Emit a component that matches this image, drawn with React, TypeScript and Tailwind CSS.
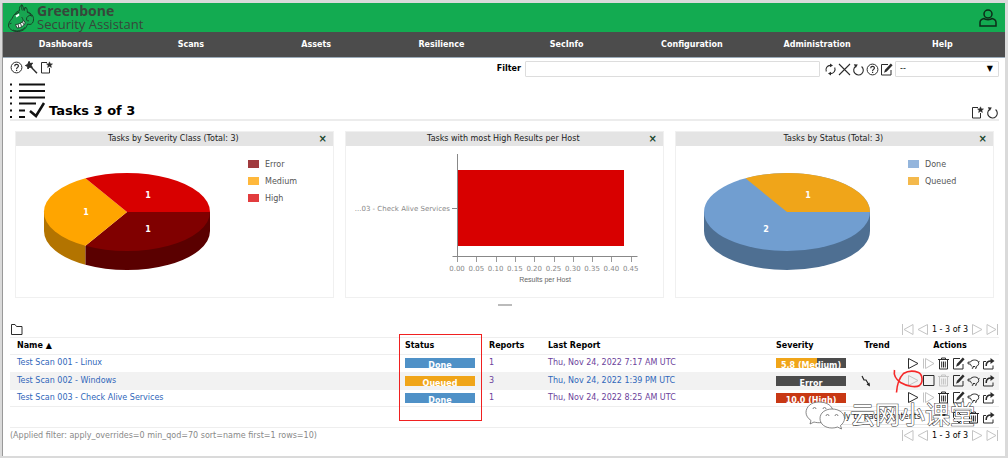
import React from 'react';

interface IconProps {
    children: React.ReactNode;
    label: string;
    muted?: boolean;
}

const IconButton: React.FC<IconProps> = ({ children, label, muted }) => (
    <button
        type="button"
        aria-label={label}
        title={label}
        disabled={muted}
        className={muted ? 'block shrink-0 text-[#c4c4c4]' : 'block shrink-0 text-[#2c2c2c]'}
    >
        <svg viewBox="0 0 13 13" className="block h-[13px] w-[13px]" fill="none" stroke="currentColor" strokeWidth="1">
            {children}
        </svg>
    </button>
);

const HelpIcon = () => (
    <IconButton label="Help">
        <circle cx="6.5" cy="6.5" r="5.4" />
        <path d="M4.7 5.2c0-2.4 3.7-2.3 3.7-.2 0 1.4-1.8 1.4-1.8 3M6.6 8.8v1.2" strokeWidth="1.2" />
    </IconButton>
);

const WandIcon = () => (
    <IconButton label="Task Wizard">
        <path d="M5.5 5.5l6.5 6.8" strokeWidth="1.4" />
        <path d="M4.1.3l.9 2.2 2.6-.4-1.5 2.1 1.2 2.2-2.5-.4L2.9 8l-.3-2.5L.4 4.500l2.200-1z" fill="currentColor" />
    </IconButton>
);

const NewIcon = () => (
    <IconButton label="New">
        <path d="M7 1.500H1.500v10.500h8V7" />
        <path d="M9.500.8l.8 1.900 2.200.2-1.600 1.400.5 2.200-1.900-1.200-1.900 1.200.5-2.200-1.600-1.400 2.200-.2z" fill="currentColor" strokeWidth=".5" />
    </IconButton>
);

const RefreshIcon = () => (
    <IconButton label="Update Filter">
        <path d="M2.300 8.500A4.400 4.400 0 0 1 6.500 2.400M10.700 4.500a4.400 4.400 0 0 1-4.200 6.100" strokeWidth="1.100" />
        <path d="M6 .5l3 1.900-3 1.900zM7 8.700l-3 1.900 3 1.900z" fill="currentColor" stroke="none" />
    </IconButton>
);

const RemoveIcon = () => (
    <IconButton label="Remove Filter">
        <path d="M1 1l11 11M12 1L1 12" strokeWidth="1.100" />
    </IconButton>
);

const ResetIcon = () => (
    <IconButton label="Reset">
        <path d="M3.800 3.200a4.800 4.800 0 1 0 5.800.3" strokeWidth="1.100" />
        <path d="M1.800 1.200l4 .2-2 3.500z" fill="currentColor" stroke="none" />
    </IconButton>
);

const EditIcon = () => (
    <IconButton label="Edit">
        <path d="M8 1.500H1.500v10.500h9.500V7" />
        <path d="M4 9.800l1-3L10.800.6l1.800 1.700L6.800 8.600z" fill="currentColor" stroke="none" />
    </IconButton>
);

const PlayIcon = ({ muted }: { muted?: boolean }) => (
    <IconButton label="Start" muted={muted}>
        <path d="M1.500 1.500l9.500 5-9.500 5z" />
    </IconButton>
);

const ResumeIcon = () => (
    <IconButton label="Resume" muted>
        <path d="M1.500 1.500v10M3.500 1.500v10M3.500 1.500l8.500 5-8.500 5" />
    </IconButton>
);

const StopIcon = () => (
    <IconButton label="Stop">
        <path d="M1.500 1.500h10.500v10H1.500z" />
    </IconButton>
);

const TrashIcon = ({ muted }: { muted?: boolean }) => (
    <IconButton label="Move to Trashcan" muted={muted}>
        <path d="M1 2.500h11M4.500 2.500V1h4v1.500M2.500 2.500v9.500h8V2.500M4.700 4.500v6M6.500 4.500v6M8.300 4.500v6" />
    </IconButton>
);

const CloneIcon = () => (
    <IconButton label="Clone">
        <path d="M3.500 5C4.500 2.400 10.500 2.300 11.500 5 12.300 7.300 10.800 9 9.200 9.500v1.700H8M8 9.500H6v1.700H4.800M5 9.500C4 8.700 3.700 8 3.500 7.200L1 6.800V5.200l2.500-.2" />
        <path d="M11.500 5l1-.6" />
    </IconButton>
);

const ExportIcon = () => (
    <IconButton label="Export">
        <path d="M4 4.500H1.500v7.500h9.500V8.500" />
        <path d="M4.200 9C4 5.500 6 4 9 4" strokeWidth="1.600" />
        <path d="M8.500 1l4 3-4 3z" fill="currentColor" stroke="none" />
    </IconButton>
);

const TagIcon = () => (
    <IconButton label="Add Tag">
        <path d="M1.500 1.500h5L12 7l-5 5-5.500-5.500z" />
        <circle cx="4" cy="4" r="1" />
    </IconButton>
);

const Pagination = () => (
    <div className="flex items-center gap-[2px] text-black">
        <IconButton label="First" muted><path d="M1.500 1v11M12 1.500l-9 5 9 5z" /></IconButton>
        <IconButton label="Previous" muted><path d="M11.500 1.500l-9.500 5 9.500 5z" /></IconButton>
        <span className="px-px">1 - 3 of 3</span>
        <IconButton label="Next" muted><path d="M1.500 1.500l9.500 5-9.500 5z" /></IconButton>
        <IconButton label="Last" muted><path d="M11.500 1v11M1 1.500l9 5-9 5z" /></IconButton>
    </div>
);

const Logo = () => (
    <svg viewBox="0 0 28 28" className="h-7 w-7" fill="none" stroke="#173a25" strokeWidth=".9">
        {/* ears and head */}
        <path d="M12.500 6.500C12 4 13 1.500 15 .8c1 1.500 1.500 3 1.500 4.700l2-2.500c1.500 1.500 2 3 1.700 4.700C24 9 27 12 26.500 16c-.2 2.500-1.500 4-3.500 4.500l-2.500-.5c-1 4-4 7-9 7.500-5 .4-9-2-10-5.500-.3-3 1.500-5 3.500-7.500C6.500 11.500 8.500 8 12.500 6.500z" fill="#18a551" />
        <path d="M15 .8c-.5 2-.5 4 .3 5.700M18.500 3l-1.500 4M24.500 11.500c-2.500-.5-5 1-5 3.500 0 2 1.500 2.500 2.500 1.500M20 8c2 1 4 2.500 4.500 4.500" />
        {/* teeth */}
        <path d="M8.500 20.500c3 0 6-1.500 8.500-4l1.200 2.500c-1.500 3-4.500 5-8.200 5z" fill="#fff" />
        <path d="M11 20.200l.8 3.500M13.500 19.200l1 3.300M15.500 17.800l1.200 2.700M2.500 20l2-.8" />
        {/* eyes */}
        <path d="M8.500 11.500l3.500-2 .3 2-2.800 2z" fill="#fff" stroke="none" />
        <path d="M8 10.500l4.500-2.500M14.500 13c1 1 1.500 2 1.500 3.500M6 26c4 2 9 .5 12-2.500" />
    </svg>
);

const menu = ['Dashboards', 'Scans', 'Assets', 'Resilience', 'SecInfo', 'Configuration', 'Administration', 'Help'];

const Header = () => (
    <header>
        <div className="flex h-[29px] items-center justify-between bg-[#13ab51] pr-[7px] pl-1">
            <div className="flex items-center gap-[2px]">
                <Logo />
                <div className="font-['Open_Sans',sans-serif] text-[#37473b]">
                    <div className="text-[14px] leading-[14px] font-bold">Greenbone</div>
                    <div className="text-[13px] leading-[13px]">Security Assistant</div>
                </div>
            </div>
            <button type="button" aria-label="User">
                <svg viewBox="0 0 20 20" className="block h-5 w-5" fill="none" stroke="#0d2b18" strokeWidth="1.500">
                    <circle cx="10" cy="6" r="4" />
                    <path d="M6 10.500c-2.500.5-4 2-4 4V18h16v-3.500c0-2-1.500-3.500-4-4-1 1.500-7 1.500-8 0z" />
                </svg>
            </button>
        </div>
        <nav className="grid h-[26px] grid-cols-8 items-center border-b border-[#9aabb9] bg-[#4c4c4c] text-center font-bold text-white">
            {menu.map((item) => (
                <a key={item} href={'#' + item.toLowerCase()}>{item}</a>
            ))}
        </nav>
    </header>
);

interface PanelProps {
    title: string;
    children: React.ReactNode;
}

const Panel: React.FC<PanelProps> = ({ title, children }) => (
    <section className="border border-[#f0f0f0]">
        <div className="flex h-[14px] items-center bg-[#e4e4e4] pr-1.5 pl-3">
            <h2 className="flex-1 text-center text-[#222]">{title}</h2>
            <button type="button" aria-label="Close" className="text-[10px] font-bold text-[#17452b]">×</button>
        </div>
        <svg viewBox="0 0 317 151" className="block w-full font-['DejaVu_Sans',sans-serif] text-[8px]">
            {children}
        </svg>
    </section>
);

const Legend = ({ items }: { items: [string, string][] }) => (
    <>
        {items.map(([name, color], i) => (
            <g key={name}>
                <rect x="232" y={14 + i * 17} width="11" height="8" fill={color} />
                <text x="249" y={21 + i * 17} fill="#555">{name}</text>
            </g>
        ))}
    </>
);

const SeverityChart = () => (
    <>
        <path d="M28 66v19a83 39 0 0 0 41.500 33.800v-19z" fill="#b37400" />
        <path d="M69.500 99.800v19A83 39 0 0 0 194 85V66z" fill="#5a0000" />
        <path d="M111 66h83a83 39 0 0 1-124.500 33.800z" fill="#800000" />
        <path d="M111 66L69.500 99.800a83 39 0 0 1 0-67.600z" fill="#ffa500" />
        <path d="M111 66L69.500 32.200A83 39 0 0 1 194 66z" fill="#d80000" />
        <g fill="#fff" fontWeight="bold" textAnchor="middle">
            <text x="132" y="52">1</text>
            <text x="70" y="69">1</text>
            <text x="132" y="86">1</text>
        </g>
        <Legend items={[['Error', '#a03a3e'], ['Medium', '#ffb83c'], ['High', '#e23c3e']]} />
    </>
);

const StatusChart = () => (
    <>
        <path d="M28 66v19a83 39 0 0 0 166 0V66z" fill="#4e6f92" />
        <ellipse cx="111" cy="66" rx="83" ry="39" fill="#719ed0" />
        <path d="M111 66L69.500 32.200A83 39 0 0 1 194 66z" fill="#f0a519" />
        <g fill="#fff" fontWeight="bold" textAnchor="middle">
            <text x="132" y="52">1</text>
            <text x="90" y="86">2</text>
        </g>
        <Legend items={[['Done', '#94b5dc'], ['Queued', '#f4b94c']]} />
    </>
);

const ticks = ['0.00', '0.05', '0.10', '0.15', '0.20', '0.25', '0.30', '0.35', '0.40', '0.45'];

const HostChart = () => (
    <>
        <rect x="112" y="24" width="166" height="76" fill="#d80000" />
        <path d="M111.500 8v108M106.500 110.500h185M106 62.500h5" stroke="#888" fill="none" />
        <text x="104" y="65" textAnchor="end" fontSize="7" fill="#888">...03 - Check Alive Services</text>
        {ticks.map((tick, i) => (
            <g key={tick}>
                <path d={`M${111.5 + Math.round(i * 19.3)} 111v5`} stroke="#999" />
                <text x={111 + i * 19.3} y="125" textAnchor="middle" fontSize="7" fill="#888">{tick}</text>
            </g>
        ))}
        <text x="199" y="136" textAnchor="middle" className="font-['Liberation_Sans',sans-serif]" fontSize="7" fill="#666">
            Results per Host
        </text>
    </>
);

const Bar = ({ text, className }: { text: string; className: string }) => (
    <div className={'h-[10px] w-[70px] overflow-hidden text-center leading-[16px] font-bold text-white ' + className}>
        {text}
    </div>
);

const tasks = [
    {
        name: 'Test Scan 001 - Linux',
        status: 'Done',
        statusColor: 'bg-[#4f91c7]',
        reports: 1,
        last: 'Thu, Nov 24, 2022 7:17 AM UTC',
        severity: '5.8 (Medium)',
        severityColor: 'bg-linear-to-r from-[#f0a519] from-58% to-[#4c4c4c] to-58%',
    },
    {
        name: 'Test Scan 002 - Windows',
        status: 'Queued',
        statusColor: 'bg-[#f0a519]',
        reports: 3,
        last: 'Thu, Nov 24, 2022 1:39 PM UTC',
        severity: 'Error',
        severityColor: 'bg-[#4c4c4c]',
    },
    {
        name: 'Test Scan 003 - Check Alive Services',
        status: 'Done',
        statusColor: 'bg-[#4f91c7]',
        reports: 1,
        last: 'Thu, Nov 24, 2022 8:25 AM UTC',
        severity: '10.0 (High)',
        severityColor: 'bg-[#c83814]',
    },
];

const TaskTable = () => (
    <table className="w-full table-fixed border-collapse text-left">
        <colgroup>
            <col />
            <col className="w-[84px]" />
            <col className="w-[59px]" />
            <col className="w-[228px]" />
            <col className="w-[80px]" />
            <col className="w-[42px]" />
            <col className="w-[101px]" />
        </colgroup>
        <thead>
            <tr className="h-[17px] border-y border-[#eee] text-black">
                <th className="pl-[7px]">Name ▲</th>
                <th className="relative">
                    Status
                    {/* highlight around the status column */}
                    <div className="pointer-events-none absolute -top-1 -left-1.5 z-10 h-[87px] w-[83px] border border-[#f02020]" />
                </th>
                <th>Reports</th>
                <th>Last Report</th>
                <th>Severity</th>
                <th className="text-center">Trend</th>
                <th className="pl-[3px] text-center">Actions</th>
            </tr>
        </thead>
        <tbody>
            {tasks.map((task, i) => {
                const queued = task.status === 'Queued';
                return (
                    <tr key={task.name} className={queued ? 'h-[18px] bg-[#f2f2f2]' : 'h-[17px] last:border-b last:border-[#eee]'}>
                        <td className="pl-[7px]"><a href={`#task-${i}`} className="text-[#2f66ba]">{task.name}</a></td>
                        <td><Bar text={task.status} className={task.statusColor} /></td>
                        <td><a href={`#reports-${i}`} className="text-[#6b3f9b]">{task.reports}</a></td>
                        <td><a href={`#last-${i}`} className={queued ? 'text-[#2f66ba]' : 'text-[#6b3f9b]'}>{task.last}</a></td>
                        <td><Bar text={task.severity} className={task.severityColor} /></td>
                        <td>
                            {queued && (
                                <svg viewBox="0 0 12 12" className="ml-1 block h-3 w-3" fill="none" stroke="#222">
                                    <path d="M2 1l2 4h2l3 5" strokeWidth="1.200" />
                                    <path d="M9.500 7.500l.500 4-3.500-2z" fill="#222" stroke="none" />
                                </svg>
                            )}
                        </td>
                        <td className="relative">
                            <div className="flex justify-end gap-[2px] pr-1">
                                <PlayIcon muted={queued} />
                                {queued ? <StopIcon /> : <ResumeIcon />}
                                <TrashIcon muted={queued} />
                                <EditIcon />
                                <CloneIcon />
                                <ExportIcon />
                            </div>
                            {queued && (
                                <svg viewBox="0 0 32 26" className="pointer-events-none absolute -top-1 -left-1.5 z-10 h-[26px] w-8" fill="none" stroke="#f52828" strokeWidth="1.600">
                                    <path d="M2.500 2c-1 5 1 9 6 12.500 6 3.500 15 5.500 19 3 4-3.500 3-11-1-13-5-2-11-1.500-15 1-4 4-6.500 12-7 19" />
                                </svg>
                            )}
                        </td>
                    </tr>
                );
            })}
        </tbody>
    </table>
);

const Watermark = () => (
    <div className="pointer-events-none absolute -top-[7px] right-6 flex items-center gap-1">
        <svg viewBox="0 0 42 32" className="h-8 w-[42px]" fill="#fff" stroke="#555" strokeWidth=".7">
            <path d="M15 2C7 2 2 7 2 12.500c0 3 2 6 5 8L6 24l4-2c2 .6 5 1 8 .5C25 22 29 17 29 12 29 6 23 2 15 2z" />
            <path d="M28 9c-7 0-12 4-12 9.500S21 28 28 28c2 0 4-.3 5.500-1l4 2-1-3.500c2-1.500 4-4 4-7C40.500 13 35 9 28 9z" />
            <g fill="none">
                <path d="M9 9a1.500 1.500 0 0 1 3 0M19 9a1.500 1.500 0 0 1 3 0M22 16a1.500 1.500 0 0 1 3 0M31 16a1.500 1.500 0 0 1 3 0" />
            </g>
        </svg>
        <span className="font-['DejaVu_Sans','Noto_Sans_CJK_SC',sans-serif] text-[25px] leading-8 text-white [-webkit-text-stroke:1px_#333] [paint-order:stroke_fill]">
            云网小课堂
        </span>
    </div>
);

export default function App() {
    return (
        <div className="bg-[#dadada] p-[3px] pb-[2px] font-['DejaVu_Sans','Noto_Sans_CJK_SC',sans-serif] text-[8px] leading-3 text-[#222]">
            <div className="bg-white shadow-[-1px_0_0_#999]">
                <Header />
                <main className="pr-[6px] pb-[14px] pl-[7px]">
                    <div className="flex items-start justify-between pt-[3px]">
                        <div className="flex gap-[2px]">
                            <HelpIcon />
                            <WandIcon />
                            <NewIcon />
                        </div>
                        <form className="flex items-center gap-px">
                            <label htmlFor="filter" className="pr-[3px] font-bold text-black">Filter</label>
                            <input id="filter" type="text" className="mr-[3px] h-4 w-[295px] rounded-[1px] border border-[#ddd] px-1 outline-none" />
                            <RefreshIcon />
                            <RemoveIcon />
                            <ResetIcon />
                            <HelpIcon />
                            <EditIcon />
                            <div className="relative ml-px">
                                <select aria-label="Saved filter" className="block h-4 w-[104px] appearance-none rounded-[1px] border border-[#ddd] px-1 text-black">
                                    <option>--</option>
                                </select>
                                <span className="pointer-events-none absolute top-0.5 right-1.5 text-black">▼</span>
                            </div>
                        </form>
                    </div>

                    <div className="mt-1 flex items-end justify-between border-b-2 border-[#ececec]">
                        <div className="flex items-end gap-[3px]">
                            <svg viewBox="0 0 36 38" className="h-[38px] w-9" fill="none" stroke="#111" strokeWidth="2">
                                <path d="M9 3.500h26M9 10h26M9 16.500h26M9 22.500h17M9 29.500h6M9 36h6" />
                                <path d="M0 3.500h2M0 10h2M0 16.500h2M0 22.500h2M0 29.500h2M0 36h2" />
                                <path d="M20 30l6 5 8-13" strokeWidth="2.500" />
                            </svg>
                            <h1 className="text-[13px] leading-4 font-bold text-black">Tasks 3 of 3</h1>
                        </div>
                        <div className="flex gap-[2px]">
                            <NewIcon />
                            <ResetIcon />
                        </div>
                    </div>

                    <div className="mt-[10px] grid grid-cols-3 gap-[11px] pr-[5px] pl-[5px]">
                        <Panel title="Tasks by Severity Class (Total: 3)"><SeverityChart /></Panel>
                        <Panel title="Tasks with most High Results per Host"><HostChart /></Panel>
                        <Panel title="Tasks by Status (Total: 3)"><StatusChart /></Panel>
                    </div>
                    <div className="mx-auto mt-1.5 h-0.5 w-3.5 bg-[#bbb]" />

                    <div className="mt-[17px] flex items-center justify-between pb-px">
                        <IconButton label="Show details">
                            <path d="M1.500 11.500v-10h3.500l1.500 2h5.500v8z" />
                        </IconButton>
                        <Pagination />
                    </div>
                    <TaskTable />
                    <div className="relative flex h-[21px] items-center justify-end gap-[2px] border-b border-[#eee] pr-1">
                        <div className="relative">
                            <select aria-label="Bulk action" className="block h-[15px] w-[126px] appearance-none border border-[#e4e4e4] px-[3px]">
                                <option>Apply to page contents</option>
                            </select>
                            <span className="pointer-events-none absolute top-px right-1">▼</span>
                        </div>
                        <TagIcon />
                        <TrashIcon />
                        <ExportIcon />
                        <Watermark />
                    </div>
                    <div className="flex items-center justify-between pt-px">
                        <span className="text-[#888]">(Applied filter: apply_overrides=0 min_qod=70 sort=name first=1 rows=10)</span>
                        <Pagination />
                    </div>
                </main>
            </div>
        </div>
    );
}
